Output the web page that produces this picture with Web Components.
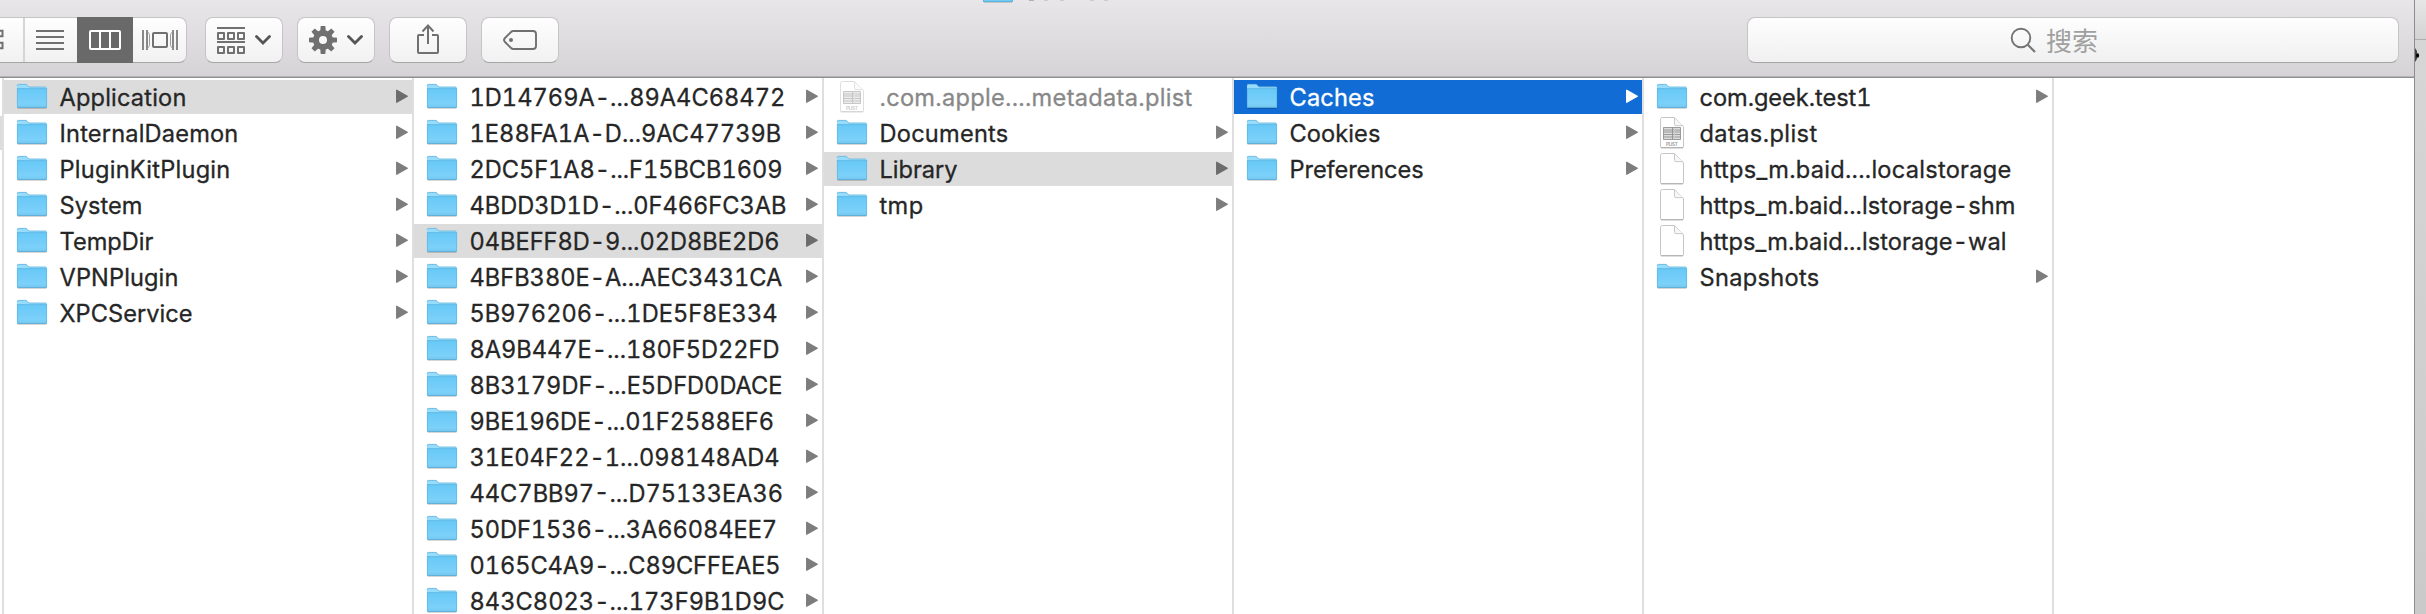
<!DOCTYPE html>
<html lang="zh-CN">
<head>
<meta charset="utf-8">
<title>Finder</title>
<style>
html,body{margin:0;height:614px;overflow:hidden;background:#fff}
</style>
</head>
<body>
<finder-window></finder-window>
<script>
const define = (name, html, setup) => {
  const t = document.createElement('template');
  t.innerHTML = html;
  customElements.define(name, class extends HTMLElement {
    connectedCallback() {
      if (this.shadowRoot) return;
      this.attachShadow({mode: 'open'}).append(t.content.cloneNode(true));
      if (setup) setup(this, this.shadowRoot);
    }
  });
};

const icons = {
  folder: `<svg width="32" height="28" viewBox="0 0 32 28"><defs><linearGradient id="g" x1="0" y1="0" x2="0" y2="1"><stop offset="0" stop-color="#68c8f6"/><stop offset="1" stop-color="#80d3fa"/></linearGradient></defs>
  <path d="M1.5 25.3h29" stroke="#000" stroke-opacity=".16" stroke-width="1.4"/>
  <path d="M1 24V2.5Q1 1 2.500 1H9.500Q10.500 1 11.200 1.900L12.500 3.200Q13 3.700 14 3.700H29.500Q31 3.700 31 5V24Z" fill="#97dcfb"/>
  <path d="M1.300 3V2.500Q1.300 1.400 2.500 1.400H9.500Q10.300 1.400 11 2.200L12.300 3.500Q13 4.100 14 4.100H30" fill="none" stroke="#68b5dc" stroke-width=".8"/>
  <path d="M1 5.500H31V24Q31 24.700 30 24.700H2Q1 24.700 1 24Z" fill="url(#g)"/>
  <path d="M1 5.600H31" stroke="#5fb9e6" stroke-width=".9"/><path d="M1.400 5V24M30.600 5V24" stroke="#62b7e2" stroke-width=".8"/>
  <path d="M2 22.200H30" stroke="#76c8ef" stroke-width=".6"/><path d="M1.300 24.300H30.700" stroke="#55a5d0" stroke-width="1"/></svg>`,
  file: `<svg width="32" height="34" viewBox="0 0 32 34"><path d="M4.500 31V3.500Q4.500 1.500 6.500 1.500H18.500L27.500 10.500V31Q27.500 31.700 26.500 31.700H5.500Q4.500 31.700 4.500 31Z" fill="#fff" stroke="#c6c6c6"/><path d="M18.500 2V8.500Q18.500 9.700 20 9.700H27" fill="#f7f7f7" stroke="#c3c3c3" stroke-width=".9"/><path d="M5 31.800H27" stroke="#aaa"/></svg>`,
  plist: `<svg width="32" height="34" viewBox="0 0 32 34"><path d="M4.500 31V3.500Q4.500 1.500 6.500 1.500H18.500L27.500 10.500V31Q27.500 31.700 26.500 31.700H5.500Q4.500 31.700 4.500 31Z" fill="#fff" stroke="#c6c6c6"/><path d="M18.500 2V8.500Q18.500 9.700 20 9.700H27" fill="#f7f7f7" stroke="#c3c3c3" stroke-width=".9"/><path d="M5 31.800H27" stroke="#aaa"/><path d="M7.500 11.500H24.500V23.500H7.500ZM16.500 11.500V23.500M7.500 14H24.500M7.500 16H24.500M7.500 18.500H24.500M7.500 21H24.500" fill="#ddd" stroke="#929292" stroke-width=".9"/><path d="M18.500 12V23" stroke="#ccc"/><text x="16" y="30" text-anchor="middle" textLength="12" font-family="Inter,sans-serif" font-size="4.800" font-weight="600" fill="#999">PLIST</text></svg>`
};

define('file-row', `<style>
:host{display:flex;box-sizing:border-box;height:34px;margin-bottom:2px;padding:0 4px 0 12px;align-items:flex-start;font:23.6px/24px Inter,"Liberation Sans",sans-serif;font-variant-numeric:tabular-nums;color:#262626;-webkit-text-stroke:.3px currentColor;--arrow:#7d7d7d}
:host([state=path]){background:#dcdcdc;--arrow:#6c6c6c}
:host([state=active]){background:#116cd6;color:#fff;--arrow:#fff}
:host([dim]){color:#888}
:host([dim]) .icon{opacity:.55}
.icon{width:32px;height:34px;margin-right:11.5px;flex:none;-webkit-text-stroke:0}
.icon.folder{padding-top:3px;height:31px}
svg{display:block}
.name{white-space:pre;flex:none;margin-top:6px;height:24px}
.arrow{margin:9px 0 0 auto;flex:none}
</style><span class="icon"></span><span class="name"><slot></slot></span>`, (el, root) => {
  const kind = el.getAttribute('kind') || 'folder';
  const box = root.querySelector('.icon');
  box.classList.add(kind);
  box.innerHTML = icons[kind];
  const name = root.querySelector('.name');
  const extra = +el.getAttribute('fit') - name.getBoundingClientRect().width;
  name.style.letterSpacing = (extra / el.textContent.length).toFixed(3) + 'px';
  if (kind === 'folder') root.innerHTML += '<svg class="arrow" width="12" height="15" viewBox="0 0 12 15"><path d="M.700 1.200V13.300L11.300 7.300Z" fill="var(--arrow)" stroke="var(--arrow)" stroke-width="1.300" stroke-linejoin="round"/></svg>';
});

define('file-column', `<style>:host{display:block;box-sizing:border-box;width:410px;flex:none;padding-top:2px;border-right:2px solid #dfdfdf;overflow:hidden}</style><slot></slot>`);

define('tool-button', `<style>
:host{display:flex;box-sizing:border-box;width:78px;height:46px;align-items:center;justify-content:center;border:1px solid #c6c4c7;border-bottom-color:#a5a5a5;border-radius:8px;background:linear-gradient(#fefefe,#f1f1f1)}
</style><slot></slot>`);

define('view-switch', `<style>
:host{display:flex;box-sizing:border-box;width:187px;height:46px;border:1px solid #c6c4c7;border-left:0;border-bottom-color:#a5a5a5;border-radius:0 8px 8px 0;background:linear-gradient(#fefefe,#f1f1f1)}
span{display:flex;align-items:center;justify-content:center;box-sizing:border-box}
.a{width:25px;border-right:2px solid #d5d5d5;justify-content:flex-start}.b{width:52px;padding-right:2px}.c{width:56px;margin:-1px 0;background:#696969}.d{width:53px}
</style>
<span class="a"><svg width="6" height="22"><path d="M-4 1.800H2.500V7.200H-4M-4 13.800H2.500V19.200H-4" fill="none" stroke="#707070" stroke-width="2"/></svg></span>
<span class="b"><svg width="28" height="20"><path d="M0 1H28M0 7H28M0 13H28M0 19H28" stroke="#707070" stroke-width="2"/></svg></span>
<span class="c"><svg width="32" height="20"><path d="M2 1H30Q31 1 31 2V18Q31 19 30 19H2Q1 19 1 18V2Q1 1 2 1ZM11 1V19M21 1V19" fill="none" stroke="#fff" stroke-width="2"/></svg></span>
<span class="d"><svg width="36" height="20"><path d="M1 0V20M35 0V20M5 0V20M31 0V20" stroke="#747474" stroke-width="1.700"/><path d="M5 1L7.500 4.500V15.500L5 19M31 1L28.500 4.500V15.500L31 19" fill="none" stroke="#999" stroke-width="1"/><rect x="11" y="3" width="14" height="14" rx="1" fill="none" stroke="#707070" stroke-width="2"/></svg></span>`);

define('search-box', `<style>
:host{display:flex;box-sizing:border-box;width:652px;height:46px;align-items:center;justify-content:center;gap:10px;padding-right:38px;border:1px solid #c6c4c7;border-bottom-color:#a5a5a5;border-radius:8px;background:linear-gradient(#fefefe,#f0f0f0);font:26px/40px "Noto Sans CJK SC",sans-serif;color:#a0a0a0}
</style><svg width="26" height="26"><circle cx="11" cy="11" r="9.300" fill="none" stroke="#747474" stroke-width="1.900"/><path d="M17.500 17.500L25 25" stroke="#747474" stroke-width="2.200"/></svg><span><slot></slot></span>`);

define('finder-toolbar', `<style>
:host{display:flex;position:relative;box-sizing:border-box;height:78px;padding:17px 15px 0 0;align-items:flex-start;background:linear-gradient(#e8e6e9,#d5d3d6);border-bottom:1px solid #8e8e8e;box-shadow:inset 0 -1px #b4b3b5}
view-switch{margin-right:18px}tool-button{margin-right:14px}search-box{margin-left:auto}
svg{display:block}.chev{margin-left:10px}
.title{position:absolute;left:983px;top:0}
</style>
<svg class="title" width="140" height="4"><path d="M0 0H30V1.500Q30 2 29 2H1Q0 2 0 1.500Z" fill="#5bb5e1"/><path d="M1 0H29V.8H1Z" fill="#7dd0f6"/><path d="M1 2.500H29" stroke="#bbb" stroke-width=".8"/><path d="M46 .4H51" stroke="#aaa"/><path d="M61 .4H65M77 .4H81M107 .4H111M121 .4H125" stroke="#c9c8ca"/></svg>
<view-switch></view-switch>
<tool-button><svg width="28" height="28"><path d="M0 2H28M0 16H28" stroke="#707070" stroke-width="2"/><path d="M1 7H7V13H1ZM11 7H17V13H11ZM21 7H27V13H21ZM1 21H7V27H1ZM11 21H17V27H11ZM21 21H27V27H21Z" fill="none" stroke="#707070" stroke-width="2" stroke-linejoin="round"/></svg><svg class="chev" width="16" height="10"><path d="M1.500 1.500L8 8L14.500 1.500" fill="none" stroke="#555" stroke-width="2.800" stroke-linecap="round"/></svg></tool-button>
<tool-button><svg width="28" height="28" viewBox="-14 -14 28 28"><circle r="7" fill="none" stroke="#707070" stroke-width="6"/><g fill="#707070" id="teeth"></g></svg><svg class="chev" width="16" height="10"><path d="M1.500 1.500L8 8L14.500 1.500" fill="none" stroke="#555" stroke-width="2.800" stroke-linecap="round"/></svg></tool-button>
<tool-button><svg width="22" height="30" style="margin-top:-2px"><path d="M7 11H2Q1 11 1 12V28Q1 29 2 29H20Q21 29 21 28V12Q21 11 20 11H15M11 20V1.500M5.500 7.500L11 1.500L16.500 7.500" fill="none" stroke="#707070" stroke-width="2"/></svg></tool-button>
<tool-button><svg width="34" height="20"><path d="M10.500 1H30Q33 1 33 4V16Q33 19 30 19H10.500Q9 19 8 18L2 12Q0 10 2 8L8 2Q9 1 10.500 1Z" fill="none" stroke="#707070" stroke-width="1.900"/><circle cx="8" cy="10" r="2" fill="#707070"/></svg></tool-button>
<search-box>搜索</search-box>`, (el, root) => {
  root.querySelector('#teeth').innerHTML = [0,45,90,135,180,225,270,315].map(a => `<path transform="rotate(${a})" d="M-2.800 -8.500L-2.300 -14H2.300L2.800 -8.500Z"/>`).join('');
});

const columns = [
 [['Application',127,'','path'],['InternalDaemon',179],['PluginKitPlugin',171],['System',83],['TempDir',94],['VPNPlugin',119],['XPCService',133]],
 [['1D14769A-...89A4C68472',315],['1E88FA1A-D...9AC47739B',311],['2DC5F1A8-...F15BCB1609',313],['4BDD3D1D-...0F466FC3AB',317],['04BEFF8D-9...02D8BE2D6',310,'','path'],['4BFB380E-A...AEC3431CA',312],['5B976206-...1DE5F8E334',308],['8A9B447E-...180F5D22FD',310],['8B3179DF-...E5DFD0DACE',313],['9BE196DE-...01F2588EF6',304.5],['31E04F22-1...098148AD4',310],['44C7BB97-...D75133EA36',313.5],['50DF1536-...3A66084EE7',307.5],['0165C4A9-...C89CFFEAE5',311],['843C8023-...173F9B1D9C',315]],
 [['.com.apple....metadata.plist',313,'plist','','dim'],['Documents',129],['Library',78,'','path'],['tmp',44]],
 [['Caches',85,'','active'],['Cookies',91],['Preferences',134]],
 [['com.geek.test1',172],['datas.plist',118,'plist'],['https_m.baid....localstorage',312,'file'],['https_m.baid...lstorage-shm',316,'file'],['https_m.baid...lstorage-wal',307,'file'],['Snapshots',120]]
];

define('finder-window', `<style>
:host{display:flex;width:2426px;height:614px;overflow:hidden}
.main{width:2414px;flex:none}
.browser{display:flex;height:536px;background:#fff}
.edge{box-sizing:border-box;width:4px;flex:none;border-right:2px solid #dfdfdf;padding-top:38px}
.edge i{display:block;height:34px;background:#dcdcdc}
.behind{box-sizing:border-box;flex:1;border-left:1px solid #8d8d8d;background:#cfcfcf}
.behind svg{display:block}
.top{height:39px;background:linear-gradient(#e7e7e7,#d3d3d3);border-bottom:1px solid #adadad}
.low{background:linear-gradient(#d6d6d6,#cacaca);height:574px}
</style>
<div class="main"><finder-toolbar></finder-toolbar><div class="browser"><div class="edge"><i></i></div></div></div>
<div class="behind"><div class="top"></div><div class="low"><svg width="11" height="30"><path d="M0 8L2 11V19L0 22Z" fill="#444"/><ellipse cx="2.600" cy="15.500" rx="1.500" ry="2.300" fill="#000"/></svg></div></div>`, (el, root) => {
  root.querySelector('.browser').insertAdjacentHTML('beforeend', columns.map(rows => '<file-column>' + rows.map(([n, w, k, s, d]) => `<file-row fit="${w}"${k ? ` kind="${k}"` : ''}${s ? ` state="${s}"` : ''}${d ? ' dim' : ''}>${n}</file-row>`).join('') + '</file-column>').join(''));
});
</script>
</body>
</html>
